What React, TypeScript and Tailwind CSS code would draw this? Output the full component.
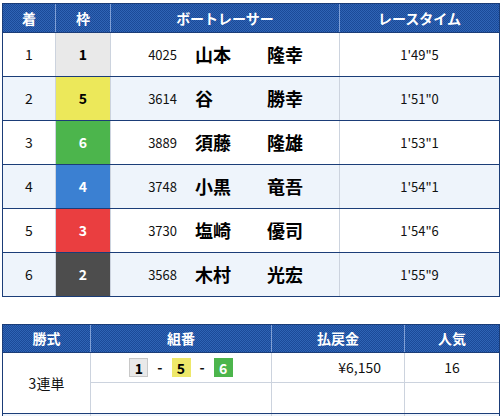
const FONT = { fontFamily: '"Noto Sans CJK JP", "DejaVu Sans", sans-serif' };

const HEAD_BG =
  "bg-[repeating-conic-gradient(#1b4a98_0%_25%,#2f64b5_0%_50%)] bg-size-[2px_2px]";

interface Result {
  rank: number;
  frame: number;
  regNo: string;
  family: string;
  given: string;
  time: string;
}

const results: Result[] = [
  { rank: 1, frame: 1, regNo: "4025", family: "山本", given: "隆幸", time: "1'49\"5" },
  { rank: 2, frame: 5, regNo: "3614", family: "谷", given: "勝幸", time: "1'51\"0" },
  { rank: 3, frame: 6, regNo: "3889", family: "須藤", given: "隆雄", time: "1'53\"1" },
  { rank: 4, frame: 4, regNo: "3748", family: "小黒", given: "竜吾", time: "1'54\"1" },
  { rank: 5, frame: 3, regNo: "3730", family: "塩崎", given: "優司", time: "1'54\"6" },
  { rank: 6, frame: 2, regNo: "3568", family: "木村", given: "光宏", time: "1'55\"9" },
];

// frame colours, same as the boat numbers
const frameClass: Record<number, string> = {
  1: "bg-[#e9e9e9] text-black",
  2: "bg-[#4d4d4d] text-white",
  3: "bg-[#ea3e40] text-white",
  4: "bg-[#3b80d2] text-white",
  5: "bg-[#ece85a] text-black",
  6: "bg-[#4cb54c] text-white",
};

const badgeClass: Record<number, string> = {
  1: "bg-[#e9e9e9] text-black border border-[#c8c8c8]",
  5: "bg-[#eee86a] text-black",
  6: "bg-[#4cb54c] text-white",
};

function Badge({ n }: { n: number }) {
  return (
    <span
      className={`w-[19px] h-[19px] flex items-center justify-center text-[14px] font-bold leading-none ${badgeClass[n]}`}
    >
      {n}
    </span>
  );
}

export default function App() {
  return (
    <div className="bg-white w-[501px] h-[416px] overflow-hidden pt-[3px] pl-[2px] text-[#111]" style={FONT}>
      {/* race result */}
      <div className="w-[498px] border border-[#1b3d78]">
        <div className={`flex h-[28px] items-center text-white font-bold text-[14px] ${HEAD_BG}`}>
          <div className="w-[53px] h-full flex items-center justify-center border-r border-[#7f9fd6]">着</div>
          <div className="w-[55px] h-full flex items-center justify-center border-r border-[#7f9fd6]">枠</div>
          <div className="w-[229px] h-full flex items-center justify-center border-r border-[#7f9fd6]">ボートレーサー</div>
          <div className="w-[159px] h-full flex items-center justify-center">レースタイム</div>
        </div>
        {results.map((r, i) => (
          <div
            key={r.rank}
            className={`flex h-[44px] border-t border-[#1b3d78] ${i % 2 ? "bg-[#eef4fb]" : "bg-white"}`}
          >
            <div className="w-[53px] flex items-center justify-center border-r border-[#ccd3de] text-[14px]">
              {r.rank}
            </div>
            <div
              className={`w-[55px] flex items-center justify-center border-r border-[#ccd3de] text-[14px] font-bold ${frameClass[r.frame]}`}
            >
              {r.frame}
            </div>
            <div className="w-[229px] flex items-center border-r border-[#ccd3de]">
              <span className="w-[66px] text-right text-[13px]">{r.regNo}</span>
              <span className="ml-[18px] w-[72px] text-[18px] font-bold text-black">{r.family}</span>
              <span className="text-[18px] font-bold text-black">{r.given}</span>
            </div>
            <div className="w-[159px] flex items-center justify-center text-[13px]">{r.time}</div>
          </div>
        ))}
      </div>

      {/* payouts */}
      <div className="mt-[27px] w-[498px] border border-[#1b3d78]">
        <div className={`grid grid-cols-[88px_181px_133px_94px] h-[27px] text-white font-bold text-[14px] ${HEAD_BG}`}>
          <div className="flex items-center justify-center border-r border-[#7f9fd6]">勝式</div>
          <div className="flex items-center justify-center border-r border-[#7f9fd6]">組番</div>
          <div className="flex items-center justify-center border-r border-[#7f9fd6]">払戻金</div>
          <div className="flex items-center justify-center">人気</div>
        </div>
        <div className="grid grid-cols-[88px_181px_133px_94px] grid-rows-[30px_30px] border-t border-[#1b3d78] text-[14px]">
          <div className="row-span-2 flex items-center justify-center border-r border-[#ccd3de]">3連単</div>
          <div className="flex items-center justify-center gap-[9px] border-r border-[#ccd3de] border-b">
            <Badge n={1} />
            <span className="font-bold">-</span>
            <Badge n={5} />
            <span className="font-bold">-</span>
            <Badge n={6} />
          </div>
          <div className="flex items-center justify-end pr-[23px] border-r border-[#ccd3de] border-b">¥6,150</div>
          <div className="flex items-center justify-center border-b border-[#ccd3de]">16</div>
          <div className="border-r border-[#ccd3de]" />
          <div className="border-r border-[#ccd3de]" />
          <div />
        </div>
        <div className="grid grid-cols-[88px_181px_133px_94px] h-[30px] border-t border-[#1b3d78] bg-[#eef4fb]">
          <div className="border-r border-[#ccd3de]" />
          <div className="border-r border-[#ccd3de]" />
          <div className="border-r border-[#ccd3de]" />
          <div />
        </div>
      </div>
    </div>
  );
}
